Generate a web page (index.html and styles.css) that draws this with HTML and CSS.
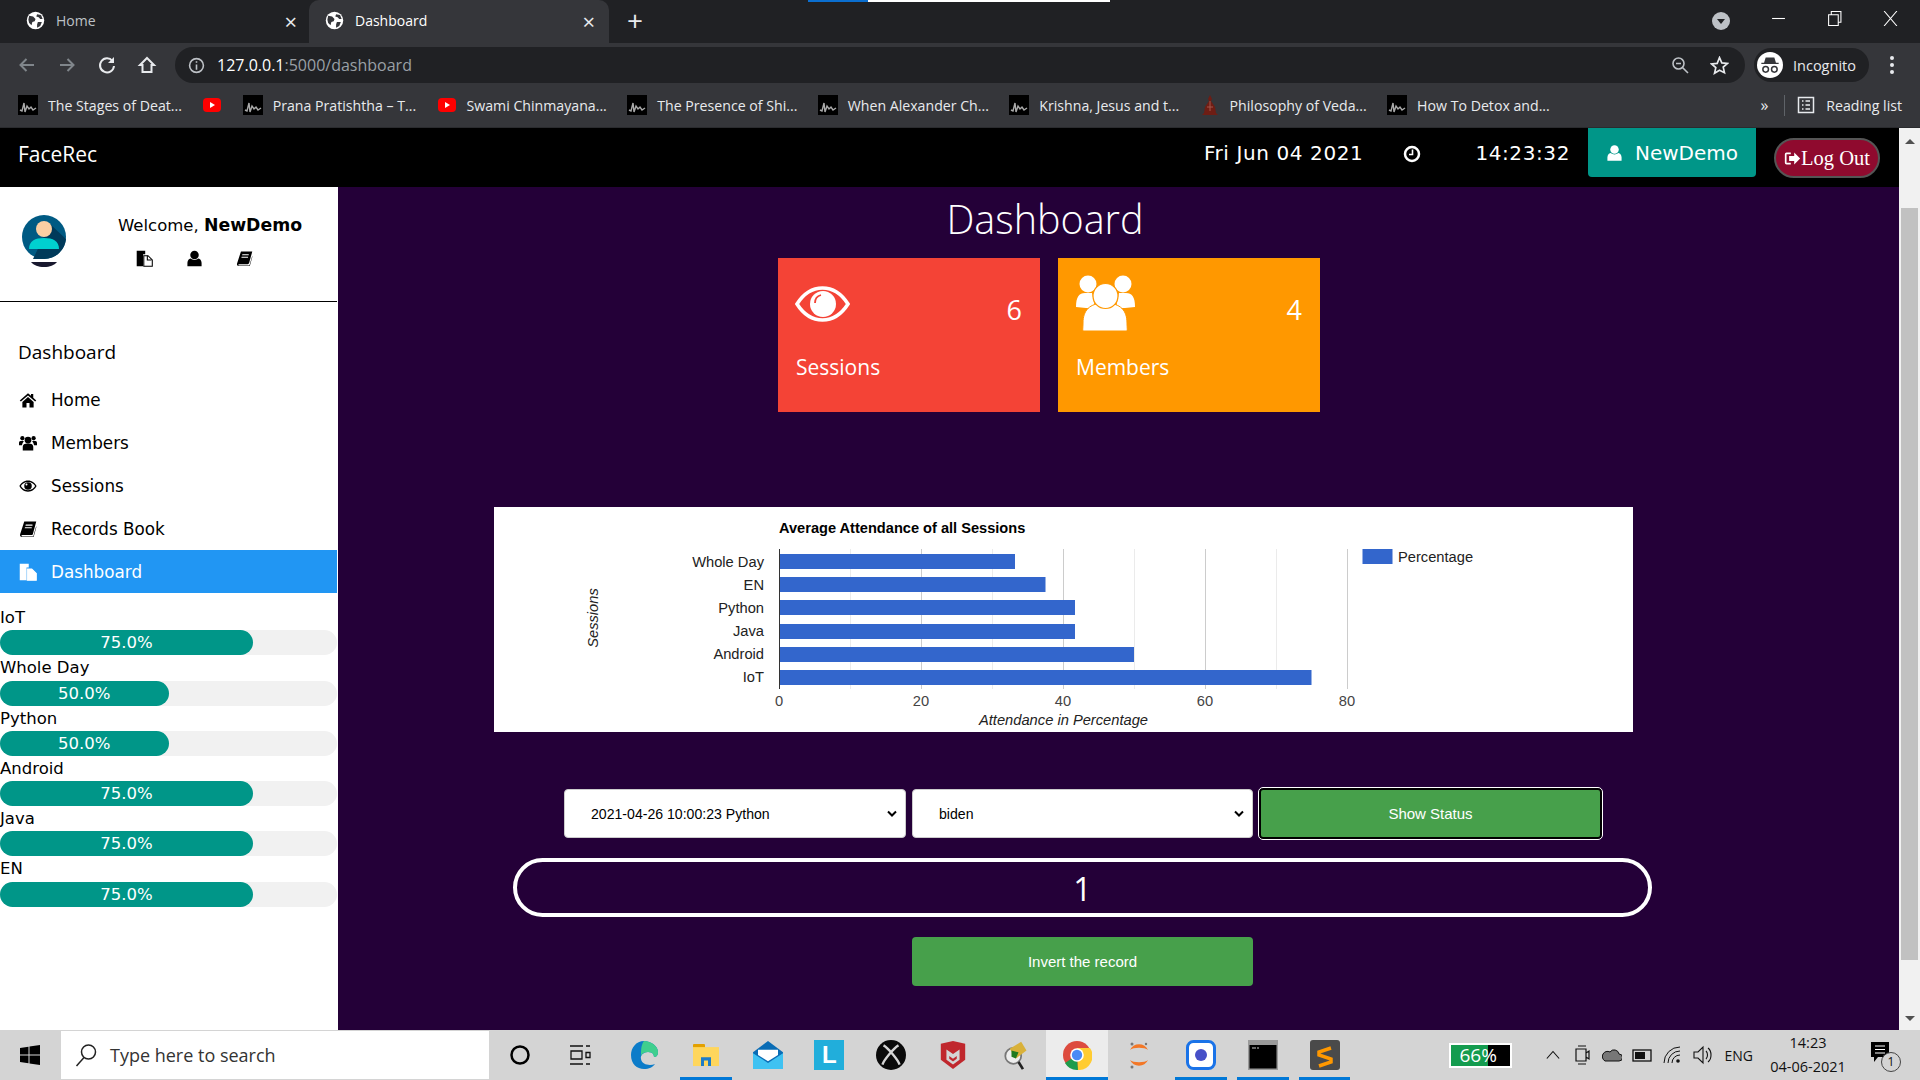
FILE: index.html
```html
<!DOCTYPE html>
<html lang="en">
<head>
  <meta charset="UTF-8">
  <title>Dashboard</title>
  <link rel="stylesheet" href="styles.css">
</head>
<body>
  <svg class="defs">
    <symbol id="i-globe" viewBox="0 0 24 24">
      <circle cx="12" cy="12" r="11" fill="#fff"/>
      <path d="M4 6l5 1 3 3-1 3-3 1-1 4-3-3-1-4zM14 4l5 1 2 5-3 0-2-2-3-1zM15 14l5 0-2 5-4 2 0-4z" fill="#35363a"/>
    </symbol>
    <symbol id="i-fav" viewBox="0 0 20 20">
      <rect width="20" height="20" fill="#000"/>
      <path d="M2 15l2 1 2-8 1 9 2-6 2 3 2-2 2 3 3-2" fill="none" stroke="#aaa" stroke-width="1.4"/>
    </symbol>
    <symbol id="i-yt" viewBox="0 0 20 20">
      <rect x="1" y="3" width="18" height="14" rx="4" fill="#f00"/>
      <path d="M8 7l5 3-5 3z" fill="#fff"/>
    </symbol>
    <symbol id="i-home" viewBox="0 0 24 24">
      <path d="M12 3L1 12.5l1.5 1.6L12 6l9.500 8.100L23 12.500l-4-3.500V4h-3v2.400zM4.500 14.500V22H10v-6h4v6h5.500v-7.500L12 8z"/>
    </symbol>
    <symbol id="i-users" viewBox="0 0 24 24">
      <circle cx="12" cy="8" r="4.500"/><circle cx="4.500" cy="5.500" r="2.800"/><circle cx="19.500" cy="5.500" r="2.800"/>
      <path d="M5 22v-5c0-3 2-4.500 7-4.500s7 1.500 7 4.500v5zM0 15v-3c0-2 1-3 4.500-3 .7 0 1.300.5 2 1-1 1-2 2-2.500 5zM24 15v-3c0-2-1-3-4.500-3-.7 0-1.300.5-2 1 1 1 2 2 2.500 5z"/>
    </symbol>
    <symbol id="i-eye" viewBox="0 0 24 24">
      <path fill-rule="evenodd" d="M12 4.500C6.500 4.500 2.500 8 .5 12c2 4 6 7.500 11.500 7.500S21.500 16 23.500 12C21.500 8 17.500 4.500 12 4.500zM12 6.500c4.500 0 8 2.500 9.500 5.500-1.500 3-5 5.500-9.500 5.500S4 15 2.500 12C4 9 7.500 6.500 12 6.500z"/>
      <circle cx="12" cy="12" r="5"/><circle cx="10" cy="10" r="1.300" fill="#fff"/>
    </symbol>
    <symbol id="i-book" viewBox="0 0 24 24">
      <path fill-rule="evenodd" d="M7 2h16l-4.500 16.500c-.4 1.200-1 1.500-2 1.500H4.500c-.8 0-1.300.4-1.300 1s.5 1 1.300 1H19l4-14v2l-3.500 12.500H4C2 22.500 1 21 1.500 19zM9 6h9v1.500H8.600zM8 9.500h9V11H7.600z"/>
    </symbol>
    <symbol id="i-files" viewBox="0 0 24 24">
      <path d="M1 1h12v5h-3v17H1z"/>
      <path d="M11 8h6l6 6v9H11z" fill="#fff" stroke="currentColor" stroke-width="1.500"/>
      <path d="M16 8v6h6" fill="none" stroke="currentColor" stroke-width="1.500"/>
    </symbol>
    <symbol id="i-user" viewBox="0 0 24 24">
      <circle cx="12" cy="7" r="6"/>
      <path d="M2 23v-5c0-4 3-6 5-6 1.500 1.500 3 2 5 2s3.500-.5 5-2c2 0 5 2 5 6v5z"/>
    </symbol>
  </svg>

  <div class="tabstrip">
    <span class="loadbar"></span>
    <div class="tab">
      <svg class="tab-icon"><use href="#i-globe"/></svg>
      <span class="tab-title">Home</span>
      <span class="tab-close">×</span>
    </div>
    <div class="tab tab-active">
      <svg class="tab-icon"><use href="#i-globe"/></svg>
      <span class="tab-title">Dashboard</span>
      <span class="tab-close">×</span>
    </div>
    <span class="tab-new">+</span>
    <svg class="tab-search" viewBox="0 0 18 18"><circle cx="9" cy="9" r="9" fill="#bdc1c6"/><path d="M5 7h8l-4 5z" fill="#202124"/></svg>
    <div class="window-btns">
      <svg viewBox="0 0 14 14"><path d="M1 7h12" stroke="#fff" fill="none"/></svg>
      <svg viewBox="0 0 14 14"><path d="M1.500 3.500h9v10h-9zM4 3.500v-3h9v10h-2.500" stroke="#fff" fill="none"/></svg>
      <svg viewBox="0 0 14 14"><path d="M1 0l12 14M13 0L1 14" stroke="#fff" fill="none"/></svg>
    </div>
  </div>

  <div class="toolbar">
    <svg class="tool tool-dim" viewBox="0 0 20 20"><path d="M17 10H4M9.500 4l-6 6 6 6" fill="none" stroke="#80868b" stroke-width="2"/></svg>
    <svg class="tool tool-dim" viewBox="0 0 20 20"><path d="M3 10h13M10.500 4l6 6-6 6" fill="none" stroke="#80868b" stroke-width="2"/></svg>
    <svg class="tool" viewBox="0 0 20 20"><path d="M15.500 6A7 7 0 1 0 17 11" fill="none" stroke="#e8eaed" stroke-width="2"/><path d="M17 2v6h-6z" fill="#e8eaed"/></svg>
    <svg class="tool" viewBox="0 0 20 20"><path d="M10 3l7 7h-2.500v7h-9v-7H3z" fill="none" stroke="#e8eaed" stroke-width="2"/></svg>
    <div class="omnibox">
      <svg class="omni-info" viewBox="0 0 16 16"><circle cx="8" cy="8" r="6.500" fill="none" stroke="#bdc1c6" stroke-width="1.500"/><path d="M8 7v5M8 4v1.500" stroke="#bdc1c6" stroke-width="1.500"/></svg>
      <span class="url">127.0.0.1<span class="url-dim">:5000/dashboard</span></span>
      <svg class="omni-zoom" viewBox="0 0 18 18"><circle cx="7.500" cy="7.500" r="5.500" fill="none" stroke="#bdc1c6" stroke-width="1.600"/><path d="M11.500 11.500L17 17M5 7.500h5" stroke="#bdc1c6" stroke-width="1.600"/></svg>
      <svg class="omni-star" viewBox="0 0 18 18"><path d="M9 1.500l2.200 5 5.300.5-4 3.500 1.200 5.300L9 13.500l-4.700 2.800 1.200-5.300-4-3.500 5.300-.5z" fill="none" stroke="#e8eaed" stroke-width="1.600"/></svg>
    </div>
    <div class="incognito">
      <svg class="incognito-face" viewBox="0 0 24 24"><circle cx="12" cy="12" r="12" fill="#fff"/><path d="M8 5h8l1.500 5H20v1H4v-1h2.500z" fill="#35363a"/><circle cx="8" cy="16" r="2.600" fill="none" stroke="#35363a" stroke-width="1.400"/><circle cx="16" cy="16" r="2.600" fill="none" stroke="#35363a" stroke-width="1.400"/></svg>
      <span>Incognito</span>
    </div>
    <div class="kebab"><i></i><i></i><i></i></div>
  </div>

  <div class="bookmarks">
    <a class="bm"><svg><use href="#i-fav"/></svg>The Stages of Deat...</a>
    <a class="bm bm-icon"><svg><use href="#i-yt"/></svg></a>
    <a class="bm"><svg><use href="#i-fav"/></svg>Prana Pratishtha – T...</a>
    <a class="bm"><svg><use href="#i-yt"/></svg>Swami Chinmayana...</a>
    <a class="bm"><svg><use href="#i-fav"/></svg>The Presence of Shi...</a>
    <a class="bm"><svg><use href="#i-fav"/></svg>When Alexander Ch...</a>
    <a class="bm"><svg><use href="#i-fav"/></svg>Krishna, Jesus and t...</a>
    <a class="bm"><svg viewBox="0 0 20 20"><path d="M10 0l2 4-1 2 4 6 1 6 2 2H2l2-2 1-6 4-6-1-2z" fill="#6e1d14"/><path d="M10 6v10M7 12h6" stroke="#a5574a"/></svg>Philosophy of Veda...</a>
    <a class="bm"><svg><use href="#i-fav"/></svg>How To Detox and...</a>
    <span class="bm-more">»</span>
    <span class="bm-divider"></span>
    <a class="bm bm-reading"><svg viewBox="0 0 20 20"><path d="M2.500 2.500h15v15h-15z" fill="none" stroke="#e8eaed" stroke-width="1.500"/><path d="M6 6h1.500M9.500 6H14M6 10h1.500M9.500 10H14M6 14h1.500M9.500 14H14" stroke="#e8eaed" stroke-width="1.500"/></svg>Reading list</a>
  </div>

  <div class="page">
    <div class="app">
      <header class="navbar">
        <a class="brand">FaceRec</a>
        <span class="nav-date">Fri Jun 04 2021</span>
        <svg class="nav-clock" viewBox="0 0 18 18"><circle cx="9" cy="9" r="7" fill="none" stroke="#fff" stroke-width="2.500"/><path d="M9.500 4.500V9.500H6" fill="none" stroke="#fff" stroke-width="1.600"/></svg>
        <span class="nav-time">14:23:32</span>
        <a class="nav-user"><svg><use href="#i-user"/></svg>NewDemo</a>
        <button class="logout"><svg viewBox="0 0 20 20"><path d="M8 3H3a2 2 0 0 0-2 2v10a2 2 0 0 0 2 2h5v-2H3V5h5z" fill="#fff"/><path d="M6 7h6V3l7 7-7 7v-4H6z" fill="#fff"/></svg>Log Out</button>
      </header>

      <div class="layout">
        <aside class="sidebar">
          <div class="profile">
            <svg class="avatar" viewBox="0 0 44 52">
              <circle cx="22" cy="22" r="22" fill="#005a83"/>
              <path d="M28 9L44 24a22 22 0 0 1-22 20H11z" fill="#003a5a"/>
              <path d="M7 34c0-8 6-11 15-11s15 3 15 11z" fill="#00d0d0"/>
              <circle cx="22" cy="14" r="8" fill="#fbcfa3"/>
              <path d="M9 47h26c-3 3.500-7 5-13 5s-10-1.500-13-5z" fill="#18182e"/>
            </svg>
            <div class="welcome">
              <p class="welcome-text">Welcome, <strong>NewDemo</strong></p>
              <div class="welcome-icons">
                <svg><use href="#i-files"/></svg>
                <svg><use href="#i-user"/></svg>
                <svg><use href="#i-book"/></svg>
              </div>
            </div>
          </div>
          <h5 class="side-title">Dashboard</h5>
          <nav class="side-nav">
            <a class="side-item"><svg><use href="#i-home"/></svg>Home</a>
            <a class="side-item"><svg><use href="#i-users"/></svg>Members</a>
            <a class="side-item"><svg><use href="#i-eye"/></svg>Sessions</a>
            <a class="side-item"><svg><use href="#i-book"/></svg>Records Book</a>
            <a class="side-item side-active"><svg><use href="#i-files"/></svg>Dashboard</a>
          </nav>
          <div class="progress-list">
            <div class="progress-label">IoT</div>
            <div class="progress"><div class="progress-fill" style="width:75%">75.0%</div></div>
            <div class="progress-label">Whole Day</div>
            <div class="progress"><div class="progress-fill" style="width:50%">50.0%</div></div>
            <div class="progress-label">Python</div>
            <div class="progress"><div class="progress-fill" style="width:50%">50.0%</div></div>
            <div class="progress-label">Android</div>
            <div class="progress"><div class="progress-fill" style="width:75%">75.0%</div></div>
            <div class="progress-label">Java</div>
            <div class="progress"><div class="progress-fill" style="width:75%">75.0%</div></div>
            <div class="progress-label">EN</div>
            <div class="progress"><div class="progress-fill" style="width:75%">75.0%</div></div>
          </div>
        </aside>

        <main class="content">
          <h1 class="page-title">Dashboard</h1>
          <div class="cards">
            <div class="card card-red">
              <div class="card-top">
                <svg class="card-eye" viewBox="0 0 55 36">
                  <path d="M2 18C9 7 17 2 27.500 2S46 7 53 18C46 29 38 34 27.500 34S9 29 2 18z" fill="none" stroke="#fff" stroke-width="3.600"/>
                  <circle cx="28" cy="18" r="13" fill="#fff"/>
                  <path d="M20 17c0-4 2-7 6-8" fill="none" stroke="#f44336" stroke-width="1.800"/>
                </svg>
                <span class="card-num">6</span>
              </div>
              <div class="card-label">Sessions</div>
            </div>
            <div class="card card-orange">
              <div class="card-top">
                <svg class="card-people" viewBox="0 0 60 56">
                  <circle cx="12" cy="9" r="8.500" fill="#fff"/><circle cx="47" cy="9" r="8.500" fill="#fff"/>
                  <path d="M0 32c0-10 3-14 9-14h7l3 15-9 0zM59 32c0-10-3-14-9-14h-7l-3 15 9 0z" fill="#fff"/>
                  <path d="M8 56c-2 0-1-2-1-8 0-12 6-20 22-20s22 8 22 20c0 6 1 8-1 8z" fill="#fff" stroke="#ff9800"/>
                  <circle cx="29.500" cy="21" r="12.500" fill="#fff" stroke="#ff9800" stroke-width="1.200"/>
                </svg>
                <span class="card-num">4</span>
              </div>
              <div class="card-label">Members</div>
            </div>
          </div>

          <div class="chart">
            <svg class="chart-svg" viewBox="0 0 1139 225">
              <text class="chart-title" x="285" y="26">Average Attendance of all Sessions</text>
              <g class="grid-minor">
                <path d="M356.500 42v140M498.500 42v140M640.500 42v140M782.500 42v140"/>
              </g>
              <g class="grid-major">
                <path d="M427.500 42v140M569.500 42v140M711.500 42v140M853.500 42v140"/>
              </g>
              <g class="bars">
                <rect x="285" y="47" width="236" height="15"/>
                <rect x="285" y="70" width="266.500" height="15"/>
                <rect x="285" y="93" width="296" height="15"/>
                <rect x="285" y="117" width="296" height="15"/>
                <rect x="285" y="140" width="355" height="15"/>
                <rect x="285" y="163" width="532.500" height="15"/>
                <rect x="868.500" y="42" width="30" height="15"/>
              </g>
              <path class="axis" d="M285.500 42v140"/>
              <g class="cat-labels">
                <text x="270" y="59.500">Whole Day</text>
                <text x="270" y="82.500">EN</text>
                <text x="270" y="105.500">Python</text>
                <text x="270" y="128.500">Java</text>
                <text x="270" y="151.500">Android</text>
                <text x="270" y="175">IoT</text>
              </g>
              <g class="val-labels">
                <text x="285" y="199">0</text>
                <text x="427" y="199">20</text>
                <text x="569" y="199">40</text>
                <text x="711" y="199">60</text>
                <text x="853" y="199">80</text>
              </g>
              <text class="legend-label" x="904" y="54.500">Percentage</text>
              <text class="axis-title" x="569.500" y="218">Attendance in Percentage</text>
              <text class="axis-title" transform="translate(104 111) rotate(-90)">Sessions</text>
            </svg>
          </div>

          <form class="status-form">
            <select class="field">
              <option>2021-04-26 10:00:23 Python</option>
            </select>
            <select class="field field-name">
              <option>biden</option>
            </select>
            <button type="button" class="btn btn-focus">Show Status</button>
          </form>

          <div class="result">1</div>
          <button type="button" class="btn btn-invert">Invert the record</button>
        </main>
      </div>
    </div>

    <div class="scrollbar">
      <span class="arrow-up"></span>
      <span class="thumb"></span>
      <span class="arrow-down"></span>
    </div>
  </div>

  <footer class="taskbar">
    <svg class="win-logo" viewBox="0 0 20 20"><path d="M0 3l8.500-1.200v7.700H0zM9.500 1.600L20 0v9.500H9.500zM0 10.500h8.500v7.700L0 17zM9.500 10.500H20V20L9.500 18.400z" fill="#000"/></svg>
    <div class="search">
      <svg viewBox="0 0 22 24"><circle cx="13.500" cy="9" r="7" fill="none" stroke="#222" stroke-width="1.500"/><path d="M9 14.500L1.500 23" stroke="#222" stroke-width="1.500"/></svg>
      <span>Type here to search</span>
    </div>
    <div class="task-icons">
      <span class="task"><svg viewBox="0 0 30 30"><circle cx="15" cy="15" r="8.500" fill="none" stroke="#000" stroke-width="2.500"/></svg></span>
      <span class="task"><svg viewBox="0 0 30 30"><path d="M3 6h13M3 24h13M19 6h4M19 24h4M19 12.500h4v5h-4zM4 11h11v8H4z" fill="none" stroke="#111" stroke-width="1.300"/></svg></span>
      <span class="task"><svg viewBox="0 0 28 30"><path d="M14 1C6 1 1 8 1 15c0 9 6 14 13 14 5 0 9-2 11-5-5 2-13 1-14-5-1-4 3-7 7-7 5 0 6 3 6 5 2 0 4-1 4-5C28 6 21 1 14 1z" fill="#0c7cc9"/><path d="M14 1c7 0 14 5 14 11 0 4-2 5-4 5 0-2-1-5-6-5-3 0-6 1-7 4 0-6 0-11 3-15z" fill="#3fcf8e"/></svg></span>
      <span class="task task-on"><svg viewBox="-1 -4 30 38" preserveAspectRatio="none"><rect x="1" y="1" width="12" height="6" rx="1" fill="#e3a000"/><rect x="1" y="5" width="26" height="24" fill="#ffd65c"/><path d="M9 29V18h10v11h-3v-7h-4v7z" fill="#1e7cc8"/></svg></span>
      <span class="task"><svg viewBox="0 0 30 34" preserveAspectRatio="none"><path d="M15 1l15 13v19H0V14z" fill="#0a6cb5"/><path d="M0 15l15 11 15-11v18H0z" fill="#3fc2f2"/><path d="M5 11h20v6L15 24 5 17z" fill="#fff"/></svg></span>
      <span class="task"><span class="tile-l">L</span></span>
      <span class="task"><svg viewBox="0 0 28 28"><circle cx="14" cy="14" r="14" fill="#0a0a0a"/><path d="M7 5c4 2 14 14 15 18M21 5C17 7 7 19 6 23" fill="none" stroke="#d4d4d4" stroke-width="2.200"/></svg></span>
      <span class="task"><svg viewBox="0 0 28 32"><path d="M1 4l13-3 13 3v17L14 31 1 21z" fill="#c0272d"/><path d="M7 10l7 5 7-5v11l-7 5-7-5z" fill="#d4d4d4"/><path d="M10 17l4 3 4-3v3l-4 3-4-3z" fill="#c0272d"/></svg></span>
      <span class="task"><svg viewBox="0 0 32 34"><circle cx="14" cy="18" r="9" fill="#eee" stroke="#777" stroke-width="2"/><path d="M10 10l13-8 6 10-12 9z" fill="#d9b13a"/><path d="M12 12l8 2-3 7-5-2z" fill="#1f7a1f"/><path d="M20 25l5 8" stroke="#222" stroke-width="3"/></svg></span>
      <span class="task task-on task-active"><svg viewBox="0 0 30 30"><circle cx="15" cy="15" r="14" fill="#dd4b3e"/><path d="M15 15L3 23a14 14 0 0 0 13 6.900z" fill="#1e9c4b"/><path d="M15 8h13a14 14 0 0 1-12 22z" fill="#ffcc32"/><circle cx="15" cy="15" r="6.800" fill="#fff"/><circle cx="15" cy="15" r="5.200" fill="#4a8bf5"/></svg></span>
      <span class="task"><svg viewBox="0 0 24 30"><path d="M3 10a10 10 0 0 1 18 0c-3-3-15-3-18 0zM3 20c3 3 15 3 18 0a10 10 0 0 1-18 0z" fill="#f37726"/><circle cx="5" cy="4" r="1.500" fill="#777"/><circle cx="19" cy="4" r="1.200" fill="#777"/><circle cx="5" cy="27" r="1.500" fill="#777"/></svg></span>
      <span class="task task-on"><svg viewBox="0 0 30 30"><rect x="1.500" y="1.500" width="27" height="27" rx="6" fill="#fff" stroke="#1a73e8" stroke-width="3"/><circle cx="15" cy="15" r="6" fill="#4750c8"/></svg></span>
      <span class="task task-on"><svg viewBox="0 0 30 30"><rect width="30" height="30" fill="#9a9a9a"/><rect x="1.500" y="5" width="27" height="23.500" fill="#000"/><path d="M4 8h4M9 8h2" stroke="#ccc"/></svg></span>
      <span class="task task-on"><svg viewBox="0 0 30 30"><rect width="30" height="30" rx="3" fill="#4a4a4a"/><path d="M21 8L9 12v3l12 4v3L9 26" fill="none" stroke="#ff9800" stroke-width="3.500"/></svg></span>
    </div>
    <div class="tray">
      <div class="battery"><div class="battery-fill">66%</div></div>
      <svg class="tray-chevron" viewBox="0 0 16 16"><path d="M1 12l7-8 7 8" fill="none" stroke="#111" stroke-width="1.300"/></svg>
      <svg class="tray-icon" viewBox="0 0 20 20"><path d="M6 1h8M6 19h8M4 4h10v12H4zM14 8l3-2v8l-3-2" fill="none" stroke="#111" stroke-width="1.200"/></svg>
      <svg class="tray-icon" viewBox="0 0 20 20"><path d="M3 16h14a3 3 0 0 0 0-7 5 5 0 0 0-9-2 4 4 0 0 0-5 9z" fill="#777" stroke="#111"/></svg>
      <svg class="tray-icon" viewBox="0 0 20 20"><rect x="1" y="5" width="18" height="11" fill="none" stroke="#111" stroke-width="1.300"/><rect x="3" y="7" width="10" height="7" fill="#111"/></svg>
      <svg class="tray-icon" viewBox="0 0 20 20"><path d="M2 18a16 16 0 0 1 16-16M6 18A12 12 0 0 1 18 6M10 18a8 8 0 0 1 8-8" fill="none" stroke="#111"/><circle cx="16" cy="16" r="1.800" fill="#111"/></svg>
      <svg class="tray-icon" viewBox="0 0 20 20"><path d="M2 7h4l5-5v16l-5-5H2zM14 6c2 2 2 6 0 8M16 3c4 3 4 11 0 14" fill="none" stroke="#111" stroke-width="1.100"/></svg>
      <span class="tray-lang">ENG</span>
      <div class="tray-clock"><span>14:23</span><span>04-06-2021</span></div>
      <div class="notify">
        <svg viewBox="0 0 20 22"><path d="M1 1h18v15H8l-4 5v-5H1z" fill="#000"/><path d="M5 5h10M5 8.500h10M5 12h10" stroke="#fff"/></svg>
        <span class="notify-count">1</span>
      </div>
    </div>
  </footer>
</body>
</html>
```

FILE: styles.css
```css
* {
  box-sizing: border-box;
}

html, body {
  margin: 0;
  height: 100%;
  overflow: hidden;
}

body {
  width: 1920px;
  height: 1080px;
  font-family: "DejaVu Sans", Verdana, sans-serif;
  display: flex;
  flex-direction: column;
}

.defs {
  display: none;
}

svg {
  display: block;
  flex: none;
}

/* browser chrome */
.tabstrip {
  position: relative;
  height: 43px;
  background: #202124;
  display: flex;
  font-family: "Open Sans", sans-serif;
  font-size: 14px;
  color: #bdc1c6;
  flex: none;
}

.loadbar {
  position: absolute;
  left: 808px;
  top: 0;
  width: 302px;
  height: 2px;
  background: linear-gradient(to right, #0b6fd0 60px, #fff 60px);
}

.tab {
  width: 309px;
  padding: 0 12px 2px 26px;
  display: flex;
  align-items: center;
  gap: 11px;
}

.tab-active {
  width: 300px;
  background: #35363a;
  color: #fff;
  border-radius: 10px 10px 0 0;
  padding: 0 14px 2px 16px;
}

.tab-icon {
  width: 19px;
  height: 19px;
}

.tab-title {
  flex: 1;
}

.tab-close {
  font-size: 22px;
  line-height: 1;
  color: #e8eaed;
}

.tab-new {
  margin: 6px 0 0 18px;
  font-size: 28px;
  line-height: 1;
  color: #e8eaed;
}

.tab-search {
  width: 18px;
  height: 18px;
  margin: 12px 0 0 auto;
}

.window-btns {
  display: flex;
  gap: 41px;
  padding: 11px 22px 0 41px;
}

.window-btns svg {
  width: 15px;
  height: 15px;
}

.toolbar {
  height: 44px;
  background: #35363a;
  display: flex;
  align-items: center;
  padding-left: 17px;
  gap: 20px;
  flex: none;
}

.tool {
  width: 20px;
  height: 20px;
}

.omnibox {
  width: 1570px;
  height: 36px;
  margin-left: -2px;
  background: #202124;
  border-radius: 18px;
  display: flex;
  align-items: center;
  padding: 0 16px 0 13px;
  font-family: "Open Sans", sans-serif;
  font-size: 16px;
  color: #fff;
}

.omni-info {
  width: 17px;
  height: 17px;
}

.url {
  margin-left: 12px;
}

.url-dim {
  color: #9aa0a6;
}

.omni-zoom {
  width: 18px;
  height: 18px;
  margin-left: auto;
}

.omni-star {
  width: 19px;
  height: 19px;
  margin-left: 21px;
}

.incognito {
  width: 115px;
  height: 34px;
  margin-left: -11px;
  background: #202124;
  border-radius: 17px;
  display: flex;
  align-items: center;
  gap: 10px;
  padding-left: 3px;
  font-family: "Open Sans", sans-serif;
  font-size: 14.500px;
  color: #e8eaed;
}

.incognito-face {
  width: 26px;
  height: 26px;
}

.kebab {
  display: flex;
  flex-direction: column;
  gap: 3px;
  margin-left: 1px;
}

.kebab i {
  display: block;
  width: 4px;
  height: 4px;
  border-radius: 50%;
  background: #e8eaed;
}

.bookmarks {
  height: 41px;
  background: #35363a;
  border-bottom: 1px solid #2a2b2e;
  display: flex;
  align-items: center;
  padding: 0 0 4px 18px;
  gap: 20.400px;
  font-family: "Open Sans", sans-serif;
  font-size: 14.150px;
  color: #e8eaed;
  flex: none;
}

.bm {
  display: flex;
  align-items: center;
  gap: 10px;
  white-space: nowrap;
}

.bm svg {
  width: 20px;
  height: 20px;
}

.bm-more {
  margin-left: auto;
  font-size: 16px;
  margin-right: -5px;
}

.bm-divider {
  width: 1px;
  height: 21px;
  background: #5f6368;
}

.bm-reading {
  margin-right: 18px;
  margin-left: -9px;
}

/* page */
.page {
  height: 902px;
  display: flex;
  flex: none;
}

.app {
  width: 1899px;
  display: flex;
  flex-direction: column;
}

.navbar {
  height: 59px;
  background: #000;
  color: #fff;
  display: flex;
  align-items: flex-start;
  flex: none;
}

.brand {
  margin: 12px 0 0 18px;
  font-family: "Open Sans", sans-serif;
  font-size: 21px;
  font-weight: 500;
}

.nav-date {
  margin: 13px 0 0 auto;
  font-size: 20px;
  letter-spacing: 0.600px;
  white-space: nowrap;
}

.nav-clock {
  width: 18px;
  height: 18px;
  margin: 17px 0 0 40px;
}

.nav-time {
  margin: 13px 0 0 54px;
  font-size: 20px;
  letter-spacing: 0.600px;
}

.nav-user {
  width: 168px;
  height: 49px;
  margin-left: 18px;
  background: #009688;
  border-radius: 0 0 4px 4px;
  display: flex;
  align-items: center;
  justify-content: center;
  gap: 12px;
  font-size: 20px;
}

.nav-user svg {
  width: 17px;
  height: 20px;
  fill: #fff;
}

.logout {
  width: 106px;
  height: 40px;
  margin: 10px 19px 0 18px;
  padding: 0;
  background: #8f0a2e;
  border: 2px solid #555;
  border-radius: 20px;
  color: #fff;
  font-family: "Liberation Serif", serif;
  font-size: 20.500px;
  display: flex;
  align-items: center;
  justify-content: center;
}

.logout svg {
  width: 17px;
  height: 17px;
}

.layout {
  display: flex;
  flex: 1;
  min-height: 0;
}

/* sidebar */
.sidebar {
  width: 338px;
  background: #fff;
  color: #000;
  flex: none;
}

.profile {
  height: 115px;
  border-bottom: 1px solid #000;
  margin-right: 1px;
  display: flex;
  padding: 28px 0 0 22px;
}

.avatar {
  width: 44px;
  height: 52px;
}

.welcome {
  margin-left: 52px;
}

.welcome-text {
  margin: 1px 0 0;
  font-size: 16.500px;
  line-height: 18px;
  white-space: nowrap;
}

.welcome-text strong {
  font-size: 17.300px;
}

.welcome-icons {
  display: flex;
  gap: 33px;
  margin: 15px 0 0 18px;
}

.welcome-icons svg {
  width: 17px;
  height: 17px;
}

.side-title {
  margin: 0;
  padding: 36px 0 0 18px;
  font-family: "Open Sans", sans-serif;
  font-size: 19px;
  font-weight: 400;
  line-height: 28px;
}

.side-nav {
  margin-top: 12px;
}

.side-item {
  height: 43px;
  padding-left: 19px;
  display: flex;
  align-items: center;
  gap: 14px;
  font-size: 16.800px;
}

.side-item svg {
  width: 18px;
  height: 18px;
}

.side-active {
  background: #2196f3;
  color: #fff;
  margin-right: 1px;
  fill: #fff;
}

.progress-list {
  padding-top: 12px;
}

.progress-label {
  height: 25.300px;
  line-height: 25px;
  font-size: 16.500px;
  white-space: nowrap;
}

.progress {
  height: 25px;
  margin-right: 1px;
  background: #f1f1f1;
  border-radius: 16px;
}

.progress-fill {
  height: 100%;
  background: #009688;
  border-radius: 16px;
  color: #fff;
  font-size: 16.500px;
  line-height: 25px;
  text-align: center;
}

/* main */
.content {
  flex: 1;
  background: #240038;
  padding-left: 440px;
  font-family: "Liberation Sans", Arial, sans-serif;
}

.page-title {
  width: 534px;
  margin: 0;
  height: 71px;
  color: #fff;
  font-family: "Open Sans", sans-serif;
  font-size: 39.500px;
  font-weight: 300;
  line-height: 64px;
  text-align: center;
}

.cards {
  display: flex;
  gap: 18px;
}

.card {
  width: 262px;
  height: 154px;
  padding: 24px 18px 0;
  color: #fff;
  font-family: "Open Sans", sans-serif;
}

.card-red {
  background: #f44336;
}

.card-orange {
  background: #ff9800;
}

.card-top {
  height: 70px;
  display: flex;
  align-items: flex-start;
  justify-content: space-between;
}

.card-eye {
  width: 55px;
  height: 36px;
  margin: 4px 0 0 -1px;
}

.card-people {
  width: 60px;
  height: 56px;
  margin-top: -7px;
}

.card-num {
  font-size: 27px;
  line-height: 38px;
  margin-top: 9px;
}

.card-label {
  font-size: 21px;
  line-height: 30px;
}

.chart {
  width: 1139px;
  height: 225px;
  margin: 95px 0 0 -284px;
  background: #fff;
}

.chart-svg {
  width: 1139px;
  height: 225px;
  font-family: "Liberation Sans", Arial, sans-serif;
  font-size: 14.700px;
  fill: #222;
}

.chart-title {
  font-weight: 700;
  font-size: 14.600px;
  fill: #000;
}

.grid-minor path {
  stroke: #ebebeb;
  fill: none;
}

.grid-major path {
  stroke: #ccc;
  fill: none;
}

.bars rect {
  fill: #3366cc;
}

.axis {
  stroke: #333;
  fill: none;
}

.cat-labels text {
  text-anchor: end;
}

.val-labels text {
  text-anchor: middle;
  fill: #444;
}

.axis-title {
  font-style: italic;
  text-anchor: middle;
}

.status-form {
  display: flex;
  align-items: center;
  margin: 56px 0 0 -214px;
}

.field {
  width: 342px;
  height: 49px;
  padding: 0 24px 0 26px;
  appearance: none;
  background: #fff url("data:image/svg+xml,%3Csvg xmlns='http://www.w3.org/2000/svg' viewBox='0 0 10 8'%3E%3Cpath d='M1 1.500l4 4 4-4' fill='none' stroke='%23000' stroke-width='2'/%3E%3C/svg%3E") no-repeat right 8px center / 10px 8px;
  border: 1px solid #ccc;
  border-radius: 4px;
  font-family: "Liberation Sans", Arial, sans-serif;
  font-size: 14.100px;
  color: #000;
}

.field-name {
  width: 341px;
  margin-left: 6px;
}

.btn {
  height: 49px;
  padding: 0;
  background: #47a04b;
  border: none;
  border-radius: 4px;
  color: #fff;
  font-family: "Liberation Sans", Arial, sans-serif;
  font-size: 15px;
}

.btn-focus {
  width: 343px;
  margin-left: 6px;
  border: 2px solid #000;
  outline: 1px solid #fff;
  height: 51px;
}

.result {
  width: 1139px;
  height: 59px;
  margin: 19px 0 0 -265px;
  border: 4px solid #fff;
  border-radius: 30px;
  color: #fff;
  font-family: "Open Sans", sans-serif;
  font-size: 32px;
  line-height: 54px;
  text-align: center;
}

.btn-invert {
  display: block;
  width: 341px;
  margin: 20px 0 0 134px;
}

/* scrollbar */
.scrollbar {
  width: 21px;
  background: #f1f1f1;
  padding: 0 2px;
  display: flex;
  flex-direction: column;
  align-items: center;
}

.arrow-up {
  margin-top: 11px;
  border: 5px solid transparent;
  border-top: 0;
  border-bottom: 5px solid #505050;
}

.thumb {
  width: 17px;
  height: 752px;
  margin-top: 64px;
  background: #c1c1c1;
}

.arrow-down {
  margin-top: 56px;
  border: 5px solid transparent;
  border-bottom: 0;
  border-top: 5px solid #505050;
}

/* windows taskbar */
.taskbar {
  height: 50px;
  background: #d4d4d4;
  display: flex;
  align-items: center;
  font-family: "Open Sans", sans-serif;
  color: #111;
  flex: none;
}

.win-logo {
  width: 20px;
  height: 20px;
  margin-left: 20px;
}

.search {
  width: 428px;
  height: 48px;
  margin-left: 21px;
  background: #fff;
  display: flex;
  align-items: center;
  gap: 13px;
  padding-left: 14px;
  font-size: 18px;
  color: #333;
}

.search svg {
  width: 22px;
  height: 24px;
}

.task-icons {
  display: flex;
  height: 50px;
}

.task {
  position: relative;
  width: 61.900px;
  height: 50px;
  display: flex;
  align-items: center;
  justify-content: center;
}

.task svg {
  width: 30px;
  height: 30px;
}

.task-on::after {
  content: "";
  position: absolute;
  left: 5px;
  right: 5px;
  bottom: 0;
  height: 3px;
  background: #0078d7;
}

.task-active {
  background: #ececec;
}

.task-active::after {
  left: 0;
  right: 0;
}

.tile-l {
  width: 30px;
  height: 30px;
  background: #21aedb;
  color: #fff;
  font-family: "Liberation Sans", sans-serif;
  font-weight: 700;
  font-size: 24px;
  line-height: 30px;
  text-align: center;
}

.tray {
  display: flex;
  align-items: center;
  margin-left: auto;
  height: 50px;
}

.battery {
  width: 63px;
  height: 25px;
  border: 2px solid #fff;
  background: #000;
  margin-right: 34px;
}

.battery-fill {
  width: 64%;
  height: 100%;
  background: #149c4f;
  color: #fff;
  font-size: 19px;
  line-height: 21px;
  white-space: nowrap;
  padding-left: 9px;
}

.tray-chevron {
  width: 14px;
  height: 14px;
  margin-right: 12px;
}

.tray-icon {
  width: 20px;
  height: 20px;
  margin-right: 10px;
}

.tray-lang {
  font-size: 14px;
  margin: 0 15px 0 3px;
}

.tray-clock {
  width: 80px;
  display: flex;
  flex-direction: column;
  align-items: center;
  gap: 6px;
  font-size: 14.500px;
  line-height: 18px;
  white-space: nowrap;
}

.notify {
  position: relative;
  width: 22px;
  height: 28px;
  margin: 0 28px 0 22px;
}

.notify svg {
  width: 20px;
  height: 22px;
}

.notify-count {
  position: absolute;
  left: 11px;
  top: 11px;
  width: 20px;
  height: 20px;
  border: 1px solid #444;
  border-radius: 50%;
  background: #d4d4d4;
  font-size: 12px;
  line-height: 18px;
  text-align: center;
}
```
